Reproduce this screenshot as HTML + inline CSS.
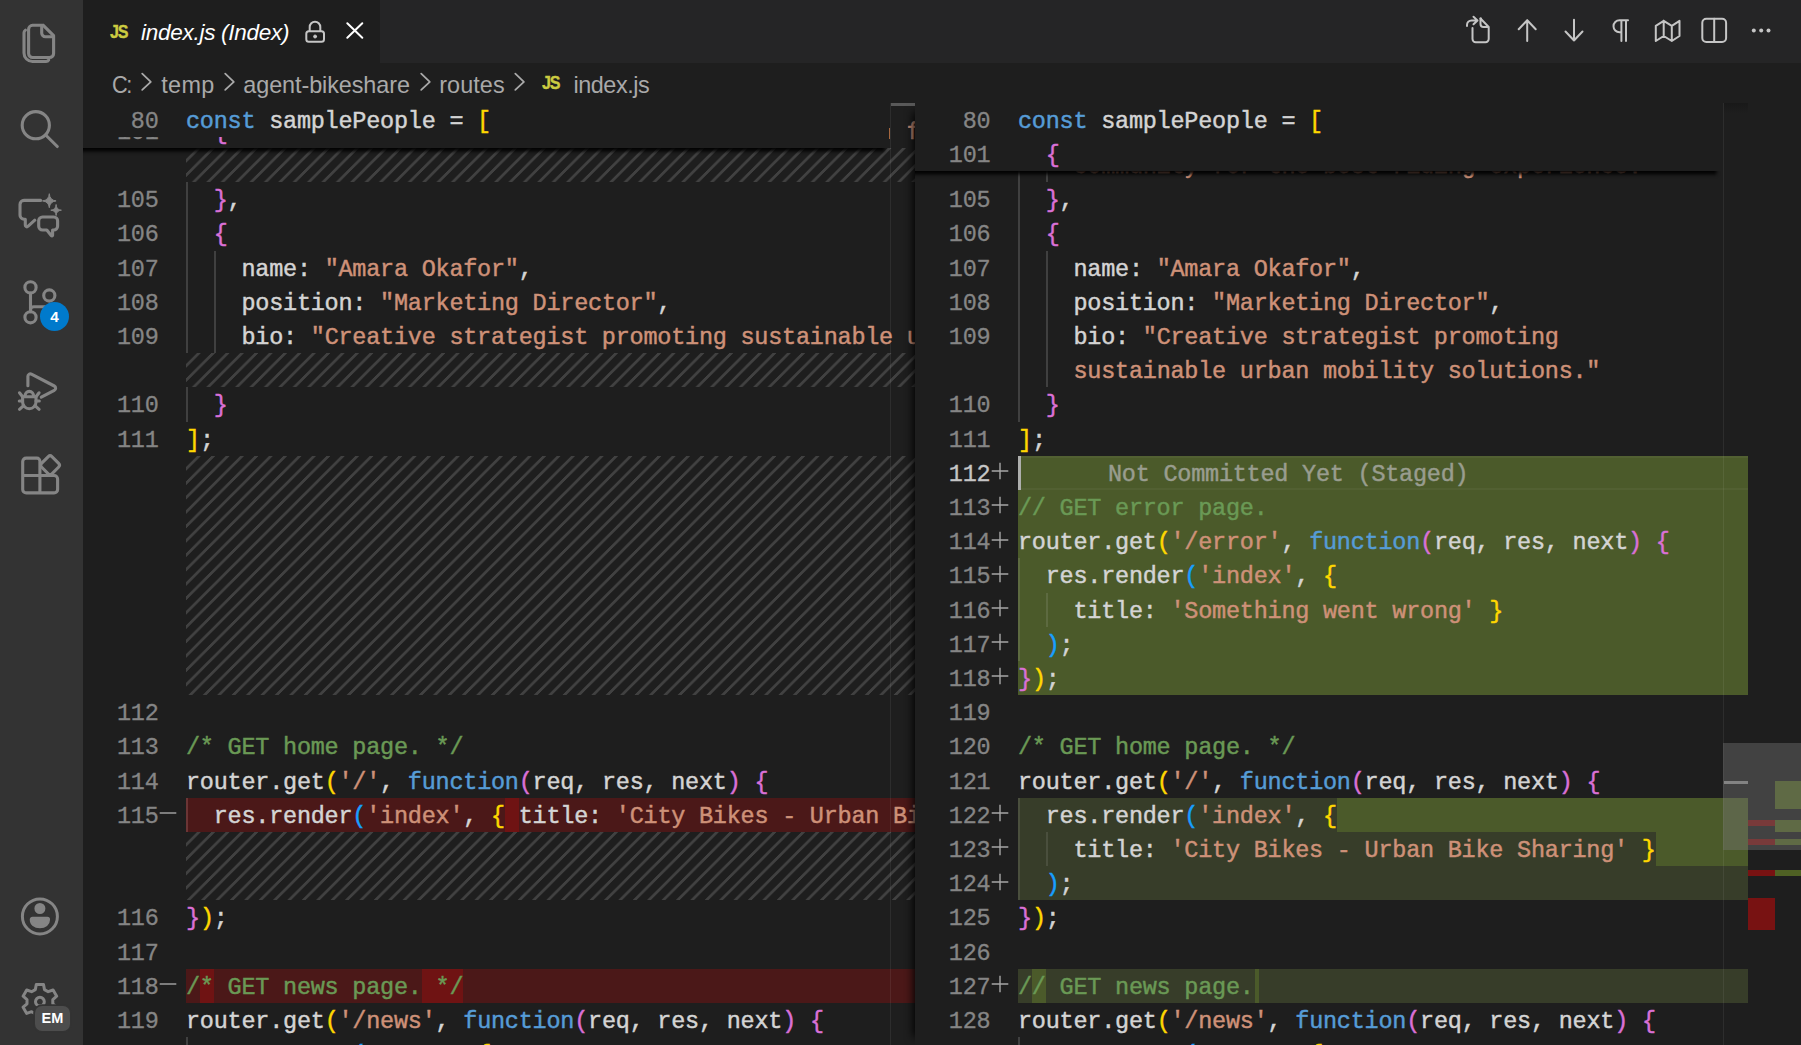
<!DOCTYPE html>
<html><head><meta charset="utf-8"><title>index.js (Index)</title>
<style>
*{box-sizing:border-box;margin:0;padding:0}
html,body{width:1801px;height:1045px;overflow:hidden;background:#1e1e1e}
body{position:relative;font-family:"Liberation Sans",sans-serif}
.abs,.r,.cl,.ln,.pane,.t{position:absolute}
.pane{overflow:hidden;background:#1e1e1e}
.cl,.ln{font-family:"Liberation Mono",monospace;font-size:23.5px;letter-spacing:-0.240px;line-height:34.2px;height:34.2px;white-space:pre;color:#d4d4d4;padding-top:2px}
.cl{-webkit-text-stroke:0.45px}.ln{-webkit-text-stroke:0.3px}
.ln{width:69.54px;text-align:right;color:#858585}
.ln.act{color:#c6c6c6}
.kw{color:#569cd6}.p{color:#d4d4d4}.s{color:#ce9178}.c{color:#6a9955}
.b1{color:#ffd700}.b2{color:#da70d6}.b3{color:#179fff}
.hatch{background-image:linear-gradient(-45deg,#414141 12.5%,rgba(0,0,0,0) 12.5%,rgba(0,0,0,0) 50%,#414141 50%,#414141 62.5%,rgba(0,0,0,0) 62.5%,rgba(0,0,0,0) 100%);background-size:14.4px 14.4px}
.t{white-space:pre}
.bc{top:69.800px;line-height:30px;font-size:23.4px;color:#a9a9a9}
</style></head>
<body>
<div id="left" class="pane" style="left:83px;top:102.6px;width:832px;height:943px">
<div class="abs" style="left:-83px;top:-102.6px">
<div class="r hatch" style="left:186.00px;top:148.00px;width:729.00px;height:34.20px"></div>
<div class="r hatch" style="left:186.00px;top:353.20px;width:729.00px;height:34.20px"></div>
<div class="r hatch" style="left:186.00px;top:455.80px;width:729.00px;height:239.40px"></div>
<div class="r hatch" style="left:186.00px;top:832.00px;width:729.00px;height:68.40px"></div>
<div class="r" style="left:186.00px;top:797.80px;width:729.00px;height:34.20px;background:#4b1818;"></div>
<div class="r" style="left:186.00px;top:968.80px;width:729.00px;height:34.20px;background:#4b1818;"></div>
<div class="r" style="left:504.78px;top:797.80px;width:13.86px;height:34.20px;background:#6f1313;"></div>
<div class="r" style="left:199.86px;top:968.80px;width:13.86px;height:34.20px;background:#6f1313;"></div>
<div class="r" style="left:421.62px;top:968.80px;width:41.58px;height:34.20px;background:#6f1313;"></div>
<div class="r" style="left:186.00px;top:182.20px;width:1.80px;height:171.00px;background:#404040;"></div>
<div class="r" style="left:186.00px;top:387.40px;width:1.80px;height:34.20px;background:#404040;"></div>
<div class="r" style="left:213.72px;top:250.60px;width:1.80px;height:102.60px;background:#404040;"></div>
<div class="r" style="left:186.00px;top:797.80px;width:1.80px;height:34.20px;background:#6b3535;"></div>
<div class="r" style="left:186.00px;top:1037.20px;width:1.80px;height:34.20px;background:#404040;"></div>
<div class="ln" style="left:89.00px;top:182px">105</div>
<div class="cl " style="left:186.00px;top:182px"><span class="p">  </span><span class="b2">}</span><span class="p">,</span></div>
<div class="ln" style="left:89.00px;top:216px">106</div>
<div class="cl " style="left:186.00px;top:216px"><span class="p">  </span><span class="b2">{</span></div>
<div class="ln" style="left:89.00px;top:251px">107</div>
<div class="cl " style="left:186.00px;top:251px"><span class="p">    name: </span><span class="s">"Amara Okafor"</span><span class="p">,</span></div>
<div class="ln" style="left:89.00px;top:285px">108</div>
<div class="cl " style="left:186.00px;top:285px"><span class="p">    position: </span><span class="s">"Marketing Director"</span><span class="p">,</span></div>
<div class="ln" style="left:89.00px;top:319px">109</div>
<div class="cl " style="left:186.00px;top:319px"><span class="p">    bio: </span><span class="s">"Creative strategist promoting sustainable urban mobility solutions."</span></div>
<div class="ln" style="left:89.00px;top:387px">110</div>
<div class="cl " style="left:186.00px;top:387px"><span class="p">  </span><span class="b2">}</span></div>
<div class="ln" style="left:89.00px;top:422px">111</div>
<div class="cl " style="left:186.00px;top:422px"><span class="b1">]</span><span class="p">;</span></div>
<div class="ln" style="left:89.00px;top:695px">112</div>
<div class="ln" style="left:89.00px;top:729px">113</div>
<div class="cl " style="left:186.00px;top:729px"><span class="c">/* GET home page. */</span></div>
<div class="ln" style="left:89.00px;top:764px">114</div>
<div class="cl " style="left:186.00px;top:764px"><span class="p">router.get</span><span class="b1">(</span><span class="s">'/'</span><span class="p">, </span><span class="kw">function</span><span class="b2">(</span><span class="p">req, res, next</span><span class="b2">)</span><span class="p"> </span><span class="b2">{</span></div>
<div class="ln" style="left:89.00px;top:798px">115</div>
<div class="cl " style="left:186.00px;top:798px"><span class="p">  res.render</span><span class="b3">(</span><span class="s">'index'</span><span class="p">, </span><span class="b1">{</span><span class="p"> title: </span><span class="s">'City Bikes - Urban Bike Sharing'</span><span class="p"> </span><span class="b1">}</span><span class="b3">)</span><span class="p">;</span></div>
<div class="ln" style="left:89.00px;top:900px">116</div>
<div class="cl " style="left:186.00px;top:900px"><span class="b2">}</span><span class="b1">)</span><span class="p">;</span></div>
<div class="ln" style="left:89.00px;top:935px">117</div>
<div class="ln" style="left:89.00px;top:969px">118</div>
<div class="cl " style="left:186.00px;top:969px"><span class="c">/* GET news page. */</span></div>
<div class="ln" style="left:89.00px;top:1003px">119</div>
<div class="cl " style="left:186.00px;top:1003px"><span class="p">router.get</span><span class="b1">(</span><span class="s">'/news'</span><span class="p">, </span><span class="kw">function</span><span class="b2">(</span><span class="p">req, res, next</span><span class="b2">)</span><span class="p"> </span><span class="b2">{</span></div>
<div class="cl " style="left:186.00px;top:1037px"><span class="p">            </span><span class="b3">(</span><span class="p">        </span><span class="b1">{</span></div>
<svg class="r" style="left:157.80px;top:803.40px" width="20" height="20" viewBox="0 0 20 20"><path d="M1.7 10H18.3" stroke="#a6a6a6" stroke-width="1.4" fill="none"/></svg>
<svg class="r" style="left:157.80px;top:974.40px" width="20" height="20" viewBox="0 0 20 20"><path d="M1.7 10H18.3" stroke="#a6a6a6" stroke-width="1.4" fill="none"/></svg>
<div class="r" style="left:890.00px;top:102.60px;width:25.00px;height:943.00px;background:#1e1e1e;"></div>
<div class="abs" style="left:890px;top:102.6px;width:25px;height:943px;overflow:hidden"><div class="abs" style="left:-890px;top:-102.6px">
<div class="r hatch" style="left:186.00px;top:148.00px;width:729.00px;height:34.20px"></div>
<div class="r hatch" style="left:186.00px;top:353.20px;width:729.00px;height:34.20px"></div>
<div class="r hatch" style="left:186.00px;top:455.80px;width:729.00px;height:239.40px"></div>
<div class="r hatch" style="left:186.00px;top:832.00px;width:729.00px;height:68.40px"></div>
<div class="r" style="left:186.00px;top:797.80px;width:729.00px;height:34.20px;background:#4b1818;"></div>
<div class="r" style="left:186.00px;top:968.80px;width:729.00px;height:34.20px;background:#4b1818;"></div>
<div class="cl " style="left:186.00px;top:319px"><span class="p">    bio: </span><span class="s">"Creative strategist promoting sustainable urban mobility solutions."</span></div>
<div class="cl " style="left:186.00px;top:798px"><span class="p">  res.render</span><span class="b3">(</span><span class="s">'index'</span><span class="p">, </span><span class="b1">{</span><span class="p"> title: </span><span class="s">'City Bikes - Urban Bike Sharing'</span><span class="p"> </span><span class="b1">}</span><span class="b3">)</span><span class="p">;</span></div>
<div class="cl " style="left:186.00px;top:114px"><span class="s">                                                    for a better tomorrow and future of mobility</span></div>
</div></div>
<div class="r" style="left:889.00px;top:128.00px;width:1.20px;height:10.50px;background:#a5673f;"></div>
<div class="r" style="left:890.00px;top:102.60px;width:1.00px;height:943.00px;background:rgba(255,255,255,0.07);"></div>
<div class="r" style="left:891.00px;top:102.60px;width:24.00px;height:3.50px;background:#595959;"></div>
<div class="r" style="left:75px;top:102.6px;width:814px;height:45.5px;background:#1e1e1e;box-shadow:0 7.2px 3.6px -3.6px #000;overflow:hidden"><div class="abs" style="left:-75px;top:-102.6px">
<div class="ln" style="left:89.00px;top:114px">101</div>
<div class="cl " style="left:186.00px;top:114px"><span class="p">  </span><span class="b2">{</span></div>
<div class="r" style="left:83.00px;top:102.60px;width:806.00px;height:34.20px;background:#1e1e1e;"></div>
<div class="ln" style="left:89.00px;top:103px">80</div>
<div class="cl " style="left:186.00px;top:103px"><span class="kw">const</span><span class="p"> samplePeople = </span><span class="b1">[</span></div>
</div></div>
</div></div>
<div id="right" class="pane" style="left:915px;top:102.6px;width:886px;height:943px;box-shadow:-10.8px 0 9px -9px #000">
<div class="abs" style="left:-915px;top:-102.6px">
<div class="r" style="left:1018.00px;top:455.80px;width:730.00px;height:239.40px;background:#4b5a2a;"></div>
<div class="r" style="left:1018.00px;top:456.30px;width:730.00px;height:1.80px;background:rgba(255,255,255,0.04);"></div>
<div class="r" style="left:1018.00px;top:487.80px;width:730.00px;height:1.80px;background:rgba(255,255,255,0.04);"></div>
<div class="r" style="left:1018.00px;top:456.30px;width:3.40px;height:33.70px;background:#aeafad;"></div>
<div class="r" style="left:1018.00px;top:797.80px;width:730.00px;height:102.60px;background:#373d29;"></div>
<div class="r" style="left:1336.78px;top:797.80px;width:411.22px;height:34.20px;background:#4b5a2a;"></div>
<div class="r" style="left:1655.56px;top:832.00px;width:92.44px;height:34.20px;background:#4b5a2a;"></div>
<div class="r" style="left:1018.00px;top:968.80px;width:730.00px;height:34.20px;background:#373d29;"></div>
<div class="r" style="left:1031.86px;top:968.80px;width:13.86px;height:34.20px;background:#4b5a2a;"></div>
<div class="r" style="left:1254.62px;top:968.80px;width:4.00px;height:34.20px;background:#4b5a2a;"></div>
<div class="r" style="left:1018.00px;top:148.00px;width:1.80px;height:273.60px;background:#404040;"></div>
<div class="r" style="left:1045.72px;top:148.00px;width:1.80px;height:34.20px;background:#404040;"></div>
<div class="r" style="left:1045.72px;top:250.60px;width:1.80px;height:136.80px;background:#404040;"></div>
<div class="r" style="left:1018.00px;top:558.40px;width:1.80px;height:102.60px;background:#5d6a40;"></div>
<div class="r" style="left:1045.72px;top:592.60px;width:1.80px;height:34.20px;background:#5d6a40;"></div>
<div class="r" style="left:1018.00px;top:797.80px;width:1.80px;height:102.60px;background:#4a4f3d;"></div>
<div class="r" style="left:1045.72px;top:832.00px;width:1.80px;height:34.20px;background:#4a4f3d;"></div>
<div class="r" style="left:1018.00px;top:1037.20px;width:1.80px;height:34.20px;background:#404040;"></div>
<div class="cl " style="left:1018.00px;top:148px"><span class="s">    community for the best riding experience."</span></div>
<div class="ln" style="left:920.90px;top:182px">105</div>
<div class="cl " style="left:1018.00px;top:182px"><span class="p">  </span><span class="b2">}</span><span class="p">,</span></div>
<div class="ln" style="left:920.90px;top:216px">106</div>
<div class="cl " style="left:1018.00px;top:216px"><span class="p">  </span><span class="b2">{</span></div>
<div class="ln" style="left:920.90px;top:251px">107</div>
<div class="cl " style="left:1018.00px;top:251px"><span class="p">    name: </span><span class="s">"Amara Okafor"</span><span class="p">,</span></div>
<div class="ln" style="left:920.90px;top:285px">108</div>
<div class="cl " style="left:1018.00px;top:285px"><span class="p">    position: </span><span class="s">"Marketing Director"</span><span class="p">,</span></div>
<div class="ln" style="left:920.90px;top:319px">109</div>
<div class="cl " style="left:1018.00px;top:319px"><span class="p">    bio: </span><span class="s">"Creative strategist promoting</span></div>
<div class="cl " style="left:1018.00px;top:353px"><span class="p">    </span><span class="s">sustainable urban mobility solutions."</span></div>
<div class="ln" style="left:920.90px;top:387px">110</div>
<div class="cl " style="left:1018.00px;top:387px"><span class="p">  </span><span class="b2">}</span></div>
<div class="ln" style="left:920.90px;top:422px">111</div>
<div class="cl " style="left:1018.00px;top:422px"><span class="b1">]</span><span class="p">;</span></div>
<div class="ln act" style="left:920.90px;top:456px">112</div>
<svg class="r" style="left:989.90px;top:461.10px" width="20" height="20" viewBox="0 0 20 20"><path d="M10 1.7V18.3M1.7 10H18.3" stroke="#a6a6a6" stroke-width="1.4" fill="none"/></svg>
<div class="ln" style="left:920.90px;top:490px">113</div>
<svg class="r" style="left:989.90px;top:495.30px" width="20" height="20" viewBox="0 0 20 20"><path d="M10 1.7V18.3M1.7 10H18.3" stroke="#a6a6a6" stroke-width="1.4" fill="none"/></svg>
<div class="cl " style="left:1018.00px;top:490px"><span class="c">// GET error page.</span></div>
<div class="ln" style="left:920.90px;top:524px">114</div>
<svg class="r" style="left:989.90px;top:529.50px" width="20" height="20" viewBox="0 0 20 20"><path d="M10 1.7V18.3M1.7 10H18.3" stroke="#a6a6a6" stroke-width="1.4" fill="none"/></svg>
<div class="cl " style="left:1018.00px;top:524px"><span class="p">router.get</span><span class="b1">(</span><span class="s">'/error'</span><span class="p">, </span><span class="kw">function</span><span class="b2">(</span><span class="p">req, res, next</span><span class="b2">)</span><span class="p"> </span><span class="b2">{</span></div>
<div class="ln" style="left:920.90px;top:558px">115</div>
<svg class="r" style="left:989.90px;top:563.70px" width="20" height="20" viewBox="0 0 20 20"><path d="M10 1.7V18.3M1.7 10H18.3" stroke="#a6a6a6" stroke-width="1.4" fill="none"/></svg>
<div class="cl " style="left:1018.00px;top:558px"><span class="p">  res.render</span><span class="b3">(</span><span class="s">'index'</span><span class="p">, </span><span class="b1">{</span></div>
<div class="ln" style="left:920.90px;top:593px">116</div>
<svg class="r" style="left:989.90px;top:597.90px" width="20" height="20" viewBox="0 0 20 20"><path d="M10 1.7V18.3M1.7 10H18.3" stroke="#a6a6a6" stroke-width="1.4" fill="none"/></svg>
<div class="cl " style="left:1018.00px;top:593px"><span class="p">    title: </span><span class="s">'Something went wrong'</span><span class="p"> </span><span class="b1">}</span></div>
<div class="ln" style="left:920.90px;top:627px">117</div>
<svg class="r" style="left:989.90px;top:632.10px" width="20" height="20" viewBox="0 0 20 20"><path d="M10 1.7V18.3M1.7 10H18.3" stroke="#a6a6a6" stroke-width="1.4" fill="none"/></svg>
<div class="cl " style="left:1018.00px;top:627px"><span class="p">  </span><span class="b3">)</span><span class="p">;</span></div>
<div class="ln" style="left:920.90px;top:661px">118</div>
<svg class="r" style="left:989.90px;top:666.30px" width="20" height="20" viewBox="0 0 20 20"><path d="M10 1.7V18.3M1.7 10H18.3" stroke="#a6a6a6" stroke-width="1.4" fill="none"/></svg>
<div class="cl " style="left:1018.00px;top:661px"><span class="b2">}</span><span class="b1">)</span><span class="p">;</span></div>
<div class="ln" style="left:920.90px;top:695px">119</div>
<div class="ln" style="left:920.90px;top:729px">120</div>
<div class="cl " style="left:1018.00px;top:729px"><span class="c">/* GET home page. */</span></div>
<div class="ln" style="left:920.90px;top:764px">121</div>
<div class="cl " style="left:1018.00px;top:764px"><span class="p">router.get</span><span class="b1">(</span><span class="s">'/'</span><span class="p">, </span><span class="kw">function</span><span class="b2">(</span><span class="p">req, res, next</span><span class="b2">)</span><span class="p"> </span><span class="b2">{</span></div>
<div class="ln" style="left:920.90px;top:798px">122</div>
<svg class="r" style="left:989.90px;top:803.10px" width="20" height="20" viewBox="0 0 20 20"><path d="M10 1.7V18.3M1.7 10H18.3" stroke="#a6a6a6" stroke-width="1.4" fill="none"/></svg>
<div class="cl " style="left:1018.00px;top:798px"><span class="p">  res.render</span><span class="b3">(</span><span class="s">'index'</span><span class="p">, </span><span class="b1">{</span></div>
<div class="ln" style="left:920.90px;top:832px">123</div>
<svg class="r" style="left:989.90px;top:837.30px" width="20" height="20" viewBox="0 0 20 20"><path d="M10 1.7V18.3M1.7 10H18.3" stroke="#a6a6a6" stroke-width="1.4" fill="none"/></svg>
<div class="cl " style="left:1018.00px;top:832px"><span class="p">    title: </span><span class="s">'City Bikes - Urban Bike Sharing'</span><span class="p"> </span><span class="b1">}</span></div>
<div class="ln" style="left:920.90px;top:866px">124</div>
<svg class="r" style="left:989.90px;top:871.50px" width="20" height="20" viewBox="0 0 20 20"><path d="M10 1.7V18.3M1.7 10H18.3" stroke="#a6a6a6" stroke-width="1.4" fill="none"/></svg>
<div class="cl " style="left:1018.00px;top:866px"><span class="p">  </span><span class="b3">)</span><span class="p">;</span></div>
<div class="ln" style="left:920.90px;top:900px">125</div>
<div class="cl " style="left:1018.00px;top:900px"><span class="b2">}</span><span class="b1">)</span><span class="p">;</span></div>
<div class="ln" style="left:920.90px;top:935px">126</div>
<div class="ln" style="left:920.90px;top:969px">127</div>
<svg class="r" style="left:989.90px;top:974.10px" width="20" height="20" viewBox="0 0 20 20"><path d="M10 1.7V18.3M1.7 10H18.3" stroke="#a6a6a6" stroke-width="1.4" fill="none"/></svg>
<div class="cl " style="left:1018.00px;top:969px"><span class="c">// GET news page.</span></div>
<div class="ln" style="left:920.90px;top:1003px">128</div>
<div class="cl " style="left:1018.00px;top:1003px"><span class="p">router.get</span><span class="b1">(</span><span class="s">'/news'</span><span class="p">, </span><span class="kw">function</span><span class="b2">(</span><span class="p">req, res, next</span><span class="b2">)</span><span class="p"> </span><span class="b2">{</span></div>
<div class="cl " style="left:1018.00px;top:1037px"><span class="p">            </span><span class="b3">(</span><span class="p">        </span><span class="b1">{</span></div>
<div class="cl" style="left:1108px;top:456px;color:#999d8f">Not Committed Yet (Staged)</div>
<div class="r" style="left:1723.00px;top:102.60px;width:1.00px;height:943.00px;background:rgba(255,255,255,0.065);"></div>
<div class="r" style="left:1724px;top:102.6px;width:24px;height:10px;background:linear-gradient(#191919,#1e1e1e)"></div>
<div class="r" style="left:1724.00px;top:781.00px;width:24.00px;height:3.00px;background:#8a8a8a;"></div>
<div class="r" style="left:1748.00px;top:102.60px;width:53.00px;height:943.00px;background:#1e1e1e;"></div>
<div class="r" style="left:1775.00px;top:781.00px;width:26.00px;height:28.00px;background:#4f6124;"></div>
<div class="r" style="left:1748.00px;top:820.00px;width:27.00px;height:6.00px;background:#781212;"></div>
<div class="r" style="left:1775.00px;top:820.00px;width:26.00px;height:12.00px;background:#4f6124;"></div>
<div class="r" style="left:1748.00px;top:839.00px;width:27.00px;height:6.00px;background:#781212;"></div>
<div class="r" style="left:1775.00px;top:839.00px;width:26.00px;height:6.00px;background:#4f6124;"></div>
<div class="r" style="left:1748.00px;top:870.00px;width:27.00px;height:6.00px;background:#781212;"></div>
<div class="r" style="left:1775.00px;top:870.00px;width:26.00px;height:6.00px;background:#4f6124;"></div>
<div class="r" style="left:1748.00px;top:898.00px;width:27.00px;height:32.00px;background:#781212;"></div>
<div class="r" style="left:1723.00px;top:743.00px;width:78.00px;height:107.00px;background:rgba(121,121,121,0.4);"></div>
<div class="r" style="left:907px;top:102.6px;width:814px;height:68.4px;background:#1e1e1e;box-shadow:0 7.2px 3.6px -3.6px #000;overflow:hidden"><div class="abs" style="left:-907px;top:-102.6px">
<div class="ln" style="left:920.90px;top:103px">80</div>
<div class="cl " style="left:1018.00px;top:103px"><span class="kw">const</span><span class="p"> samplePeople = </span><span class="b1">[</span></div>
<div class="ln" style="left:920.90px;top:137px">101</div>
<div class="cl " style="left:1018.00px;top:137px"><span class="p">  </span><span class="b2">{</span></div>
</div></div>
</div></div>
<!-- activity bar -->
<div class="r" style="left:0;top:0;width:83px;height:1045px;background:#333333"></div>
<svg class="r" style="left:0;top:0" width="83" height="1045" viewBox="0 0 83 1045" fill="none" stroke="#858585" stroke-width="3.1" stroke-linecap="round" stroke-linejoin="round">
  <!-- files -->
  <path d="M43.300 25.300H32.600a4 4 0 0 0-4 4V53.500a4 4 0 0 0 4 4H49.600a4 4 0 0 0 4-4V35.700L43.300 25.300"/>
  <path d="M41.700 25.600V33.100a3.700 3.700 0 0 0 3.700 3.700H53.300"/>
  <path d="M25.400 30.200a3 3 0 0 0-1.400 2.600V53a8.500 8.500 0 0 0 8.500 8.500H46a3.200 3.200 0 0 0 2.700-1.600"/>
  <!-- search -->
  <circle cx="35.800" cy="125.200" r="13.600"/>
  <path d="M45.700 135L57.300 146.500"/>
  <!-- chat -->
  <path d="M40.600 200.400H24a4 4 0 0 0-4 4V215.200a4 4 0 0 0 4 4h1.300v6a1.500 1.500 0 0 0 2.600 1.100L34.800 220.200"/>
  <path d="M42.500 217H53.800a3.800 3.800 0 0 1 3.800 3.800v5.400a3.800 3.800 0 0 1-3.800 3.800h-1.200v5.200a.7.700 0 0 1-1.200.500L46.800 230h-4.300a3.800 3.800 0 0 1-3.800-3.800v-5.400a3.800 3.800 0 0 1 3.800-3.800z"/>
  <path d="M49.3 194.1Q49.9 200.3 56.1 200.9Q49.9 201.5 49.3 207.7Q48.7 201.5 42.5 200.9Q48.7 200.3 49.3 194.1Z" fill="#858585" stroke-width="1"/>
  <path d="M56.1 204.9Q56.4 209.9 61.4 210.2Q56.4 210.5 56.1 215.5Q55.8 210.5 50.8 210.2Q55.8 209.9 56.1 204.9Z" fill="#858585" stroke-width="1"/>
  <!-- source control -->
  <circle cx="30.500" cy="287.400" r="5.600"/>
  <circle cx="30.500" cy="317.300" r="5.600"/>
  <circle cx="49.300" cy="295.500" r="5.600"/>
  <path d="M30.500 293V311.700M30.500 310a3.300 3.300 0 0 1 3.300-3.300H45"/>
  <!-- debug -->
  <path d="M27.900 385.800V376.300a2.400 2.400 0 0 1 3.500-2.100L54.300 386a2.400 2.400 0 0 1 0 4.300L41.300 397.200"/>
  <path d="M22.600 396.800H36V402a6.700 6.700 0 0 1-13.400 0Z"/>
  <path d="M25 396.400a4.300 5 0 0 1 8.600 0"/>
  <path d="M22.600 396.800L19.500 392.800M36 396.800L39.100 392.800M22.600 401H19.300M36 401H39.300M23.600 405.600L19.500 409.300M35 405.600L39.100 409.300"/>
  <!-- extensions -->
  <path d="M22.700 475.500V461.600a3.500 3.500 0 0 1 3.500-3.500H36.900a3 3 0 0 1 3 3V492.900M22.700 475.500H54.100a3.500 3.500 0 0 1 3.500 3.500V489.400a3.500 3.500 0 0 1-3.500 3.500H26.200a3.500 3.500 0 0 1-3.500-3.500Z"/>
  <path d="M48.300 456.600a2.600 2.600 0 0 1 3.600 0l6.800 6.800a2.600 2.600 0 0 1 0 3.600l-6.800 6.800a2.600 2.600 0 0 1-3.600 0l-6.800-6.800a2.600 2.600 0 0 1 0-3.600z"/>
  <!-- account -->
  <circle cx="39.900" cy="916.400" r="17.500" stroke-width="3"/>
  <circle cx="39.900" cy="908.500" r="4.400" fill="#858585" stroke-width="2.2"/>
  <path d="M32.500 917.500h14.800a2 2 0 0 1 2 2c0 5-4 8-9.400 8s-9.400-3-9.400-8a2 2 0 0 1 2-2z" fill="#858585" stroke-width="1.5"/>
  <!-- gear -->
  <g transform="translate(39.900 1001.700)">
   <path id="gear" d="M-3.600 -17.200L3.600 -17.200L4.600 -12.100L8.300 -10L13.200 -11.700L16.800 -5.500L12.900 -2.100L12.900 2.100L16.800 5.500L13.200 11.700L8.300 10L4.600 12.100L3.600 17.200L-3.600 17.200L-4.600 12.100L-8.300 10L-13.200 11.700L-16.800 5.500L-12.900 2.100L-12.900 -2.100L-16.800 -5.500L-13.200 -11.700L-8.300 -10L-4.600 -12.100Z" stroke-width="3"/>
   <circle cx="0" cy="0" r="4.400" stroke-width="3"/>
  </g>
</svg>
<!-- badge 4 -->
<div class="r" style="left:39.900px;top:301.700px;width:29.200px;height:29.200px;border-radius:50%;background:#007acc"></div>
<div class="t" style="left:39.900px;top:301.700px;width:29.200px;height:29.200px;line-height:29.600px;text-align:center;color:#fff;font-weight:bold;font-size:15.3px">4</div>
<!-- EM badge -->
<div class="r" style="left:34.900px;top:1006.200px;width:35.100px;height:24.800px;border-radius:7px;background:#4d4d4d;box-shadow:0 0 0 1.800px #333333"></div>
<div class="t" style="left:34.900px;top:1006.200px;width:35.100px;height:24.800px;line-height:25.500px;text-align:center;color:#fff;font-weight:bold;font-size:14.5px">EM</div>

<!-- tab bar -->
<div class="r" style="left:83px;top:0;width:1718px;height:63px;background:#252526"></div>
<div class="r" style="left:83px;top:0;width:297px;height:63px;background:#1e1e1e"></div>
<div class="t" id="tabjs" style="left:109.500px;top:20px;line-height:24px;font-size:17.5px;font-weight:bold;color:#cbcb41;letter-spacing:-1.2px;transform:scaleX(0.92);transform-origin:0 0;-webkit-text-stroke:0.35px #cbcb41">JS</div>
<div class="t" id="tablabel" style="left:141px;top:18px;line-height:30px;font-size:22.5px;font-style:italic;color:#ffffff;letter-spacing:-0.27px">index.js (Index)</div>
<svg class="r" style="left:300px;top:15px" width="30" height="32" viewBox="0 0 30 32" fill="none" stroke="#c5c5c5" stroke-width="2" stroke-linecap="round" stroke-linejoin="round">
  <path d="M9.700 16V12a5.300 5.300 0 0 1 10.600 0V16"/>
  <rect x="6.300" y="16.300" width="17.700" height="10.400" rx="2.500"/>
  <circle cx="15.100" cy="21.500" r="1.500" fill="#c5c5c5" stroke-width="1"/>
</svg>
<svg class="r" style="left:340px;top:16px" width="30" height="30" viewBox="0 0 30 30" fill="none" stroke="#ffffff" stroke-width="2" stroke-linecap="round">
  <path d="M7.300 7.200L22.300 21.800M22.300 7.200L7.300 21.800"/>
</svg>

<!-- toolbar icons -->
<svg class="r" style="left:1450px;top:0" width="351" height="63" viewBox="1450 0 351 63" fill="none" stroke="#c5c5c5" stroke-width="2" stroke-linecap="round" stroke-linejoin="round">
  <!-- go to file -->
  <path d="M1472.500 28V39a3.200 3.200 0 0 0 3.200 3.200H1485.500a3.200 3.200 0 0 0 3.200-3.200V27L1480.500 18.500V24a3 3 0 0 0 3 3h5.200"/>
  <path d="M1480.500 18.500H1481"/>
  <path d="M1467 26V25a4.500 4.500 0 0 1 4.500-4.500H1477M1473.500 16.800L1477.500 20.500L1473.500 24.300"/>
  <!-- up -->
  <path d="M1527.200 41V20.300M1518.700 29.300L1527.200 20.300L1535.700 29.300"/>
  <!-- down -->
  <path d="M1574 19.800V40.500M1565.500 31.500L1574 40.500L1582.500 31.500"/>
  <!-- pilcrow -->
  <path d="M1628 20.300H1619.500a6 6 0 0 0 0 12H1621.400M1621.400 20.300V41M1626 20.300V41"/>
  <!-- map -->
  <path d="M1655.800 25.800L1663.700 20.800L1671.800 25.800L1679.500 20.800V36L1671.800 41L1663.700 36L1655.800 41ZM1663.700 20.800V36M1671.800 25.800V41"/>
  <!-- split -->
  <rect x="1702.300" y="18.800" width="23.800" height="23.200" rx="4"/>
  <path d="M1714.200 18.800V42"/>
  <!-- ellipsis -->
  <g fill="#c5c5c5" stroke="none"><circle cx="1753.800" cy="30.500" r="2"/><circle cx="1761.200" cy="30.500" r="2"/><circle cx="1768.500" cy="30.500" r="2"/></g>
</svg>

<!-- breadcrumbs -->
<div class="r" style="left:83px;top:63px;width:1718px;height:39.600px;background:#1e1e1e"></div>
<div class="t bc" id="bc1" style="left:111.700px;letter-spacing:-1.5px;transform:scaleX(0.93);transform-origin:0 0">C:</div>
<div class="t bc" id="bc2" style="left:161.200px;letter-spacing:0.35px">temp</div>
<div class="t bc" id="bc3" style="left:243.300px;letter-spacing:-0.08px">agent-bikeshare</div>
<div class="t bc" id="bc4" style="left:439.200px;letter-spacing:0.08px">routes</div>
<div class="t bc" id="bc5" style="left:573.500px;letter-spacing:-0.45px">index.js</div>
<div class="t" id="bcjs" style="left:542px;top:71.300px;line-height:24px;font-size:17.5px;font-weight:bold;color:#cbcb41;letter-spacing:-1.2px;transform:scaleX(0.92);transform-origin:0 0;-webkit-text-stroke:0.35px #cbcb41">JS</div>
<svg class="r" style="left:83px;top:63px" width="600" height="40" viewBox="83 63 600 40" fill="none" stroke="#a9a9a9" stroke-width="1.800" stroke-linecap="round" stroke-linejoin="round">
  <path d="M142.200 73.700L150.800 81.800L142.200 89.900"/>
  <path d="M225.200 73.700L233.800 81.800L225.200 89.900"/>
  <path d="M421.200 73.700L429.800 81.800L421.200 89.900"/>
  <path d="M515.300 73.700L523.900 81.800L515.300 89.900"/>
</svg>

</body></html>
